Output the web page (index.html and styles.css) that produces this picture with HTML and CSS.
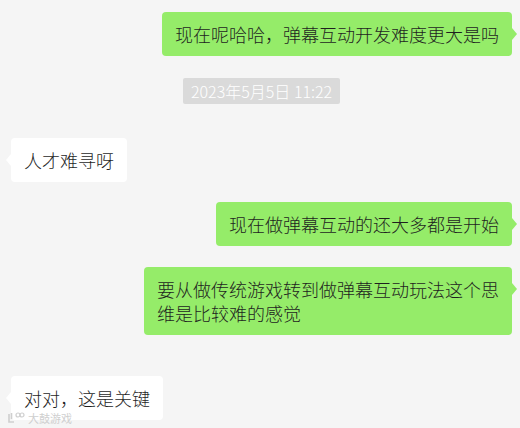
FILE: index.html
```html
<!DOCTYPE html>
<html lang="zh-CN">
<head>
<meta charset="utf-8">
<link rel="stylesheet" href="styles.css">
</head>
<body>
<div class="chat">
  <div class="row right r1"><div class="bubble green">现在呢哈哈，弹幕互动开发难度更大是吗</div></div>
  <div class="row center r2"><div class="time">2023年5月5日 11:22</div></div>
  <div class="row left r3"><div class="bubble white">人才难寻呀</div></div>
  <div class="row right r4"><div class="bubble green">现在做弹幕互动的还大多都是开始</div></div>
  <div class="row right r5"><div class="bubble green">要从做传统游戏转到做弹幕互动玩法这个思维是比较难的感觉</div></div>
  <div class="row left r6"><div class="bubble white">对对，这是关键</div></div>
</div>
<div class="watermark">
  <svg width="18" height="12" viewBox="0 0 18 12"><path d="M2 2 v8 h5 M4.5 1 v6" fill="none" stroke="#cfcfcf" stroke-width="1.6"/><circle cx="11" cy="3" r="2" fill="none" stroke="#cfcfcf" stroke-width="1.2"/><circle cx="15" cy="3" r="2" fill="none" stroke="#cfcfcf" stroke-width="1.2"/></svg>
  <span>大鼓游戏</span>
</div>
</body>
</html>
```
FILE: styles.css
```css
html, body {
  margin: 0;
  padding: 0;
  background: #f5f5f5;
  width: 520px;
  height: 428px;
  overflow: hidden;
  font-family: "Noto Sans CJK SC", "Microsoft YaHei", sans-serif;
  position: relative;
}
.chat {
  display: flex;
  flex-direction: column;
  padding: 12px 8px 0 11px;
}
.row { display: flex; }
.row.right { justify-content: flex-end; }
.row.left { justify-content: flex-start; }
.row.center { justify-content: flex-start; padding-left: 172px; }
.r2 { margin-top: 22px; }
.r3 { margin-top: 34px; }
.r4 { margin-top: 20px; }
.r5 { margin-top: 21px; }
.r6 { margin-top: 41px; }
.bubble {
  position: relative;
  font-size: 18px;
  font-weight: 300;
  line-height: 24px;
  padding: 10px 13px;
  border-radius: 4px;
  color: #1f1f1f;
  max-width: 368px;
  box-sizing: border-box;
}
.green { background: #95ec69; }
.white { background: #ffffff; }
.bubble::after {
  content: "";
  position: absolute;
  top: 16px;
  width: 0;
  height: 0;
  border-top: 6px solid transparent;
  border-bottom: 6px solid transparent;
}
.green::after {
  right: -5px;
  border-left: 5px solid #95ec69;
}
.white::after {
  left: -5px;
  border-right: 5px solid #ffffff;
}
.time {
  background: #dadada;
  color: #ffffff;
  font-size: 16px;
  font-weight: 300;
  line-height: 26px;
  padding: 0 8px;
  border-radius: 2px;
}
.watermark {
  position: absolute;
  left: 7px;
  top: 412px;
  display: flex;
  align-items: center;
  gap: 3px;
  color: #cfcfcf;
  font-size: 11px;
  line-height: 10px;
}
```
